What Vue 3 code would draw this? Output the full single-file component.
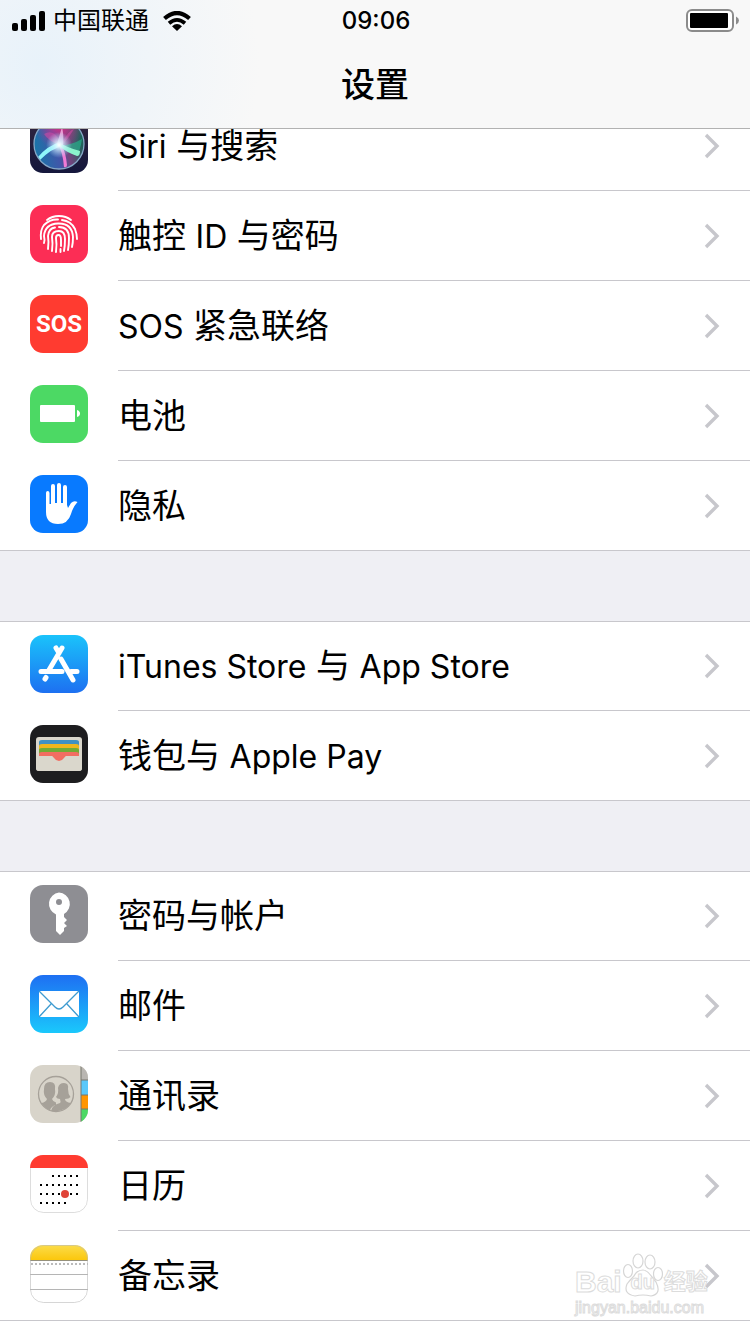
<script setup>
const groups = [
  [
    { icon: 'siri', label: 'Siri 与搜索' },
    { icon: 'touch', label: '触控 ID 与密码' },
    { icon: 'sos', label: 'SOS 紧急联络' },
    { icon: 'battery', label: '电池' },
    { icon: 'privacy', label: '隐私' },
  ],
  [
    { icon: 'store', label: 'iTunes Store 与 App Store' },
    { icon: 'wallet', label: '钱包与 Apple Pay' },
  ],
  [
    { icon: 'key', label: '密码与帐户' },
    { icon: 'mail', label: '邮件' },
    { icon: 'contacts', label: '通讯录' },
    { icon: 'calendar', label: '日历' },
    { icon: 'notes', label: '备忘录' },
  ],
]

// Latin runs are set slightly smaller than the Chinese text beside them.
const runs = (label) =>
  label.match(/[\x21-\x7e]+(?: [\x21-\x7e]+)*|[^\x21-\x7e]+/g).map((text) => ({
    text,
    latin: /[A-Za-z]/.test(text),
  }))

const calendarDots = [
  [22, 20], [28, 20], [34, 20], [40, 20], [46, 20],
  [10, 29], [16, 29], [22, 29], [28, 29], [34, 29], [40, 29], [46, 29],
  [10, 38], [16, 38], [22, 38], [28, 38], [40, 38], [46, 38],
  [10, 47], [16, 47], [22, 47], [28, 47], [34, 47],
]
</script>

<template>
  <div class="page">
    <header class="top">
      <div class="status">
        <div class="carrier">
          <svg class="signal" viewBox="0 0 34 20" aria-hidden="true">
            <rect x="0" y="12" width="6" height="8" rx="2" />
            <rect x="9" y="8" width="6" height="12" rx="2" />
            <rect x="18" y="4" width="6" height="16" rx="2" />
            <rect x="27" y="0" width="6" height="20" rx="2" />
          </svg>
          <span>中国联通</span>
          <svg class="wifi" viewBox="0 0 28 20" aria-hidden="true">
            <path d="M1.500 7.500Q14-3.500 26.500 7.500" fill="none" stroke="#000" stroke-width="4.200" />
            <path d="M6 12.300Q14 5.500 22 12.300" fill="none" stroke="#000" stroke-width="3.800" />
            <path d="M9 15.200Q14 11 19 15.200L14 20Z" />
          </svg>
        </div>
        <time class="time">09:06</time>
        <svg class="power" viewBox="0 0 54 24" aria-hidden="true">
          <rect x="1" y="1" width="46" height="21" rx="5" fill="#fff" stroke="#8b8b8b" stroke-width="2" />
          <rect x="4" y="4" width="38" height="15" rx="1" />
          <path d="M50 7.500Q53 9 53 11.500T50 15.500Z" fill="#8b8b8b" />
        </svg>
      </div>
      <h1>设置</h1>
    </header>

    <main>
      <section v-for="(group, g) in groups" :key="g" class="group">
        <ul>
          <li v-for="item in group" :key="item.icon">
            <a href="#" class="row">
              <span class="icon" aria-hidden="true">
                <span v-if="item.icon === 'sos'" class="sos">SOS</span>
                <svg v-else viewBox="0 0 58 58">
                  <defs>
                    <linearGradient id="storeFill" x2="0" y2="1"><stop stop-color="#1ac3fb" /><stop offset="1" stop-color="#1d70f1" /></linearGradient>
                    <linearGradient id="mailFill" x2="0" y2="1"><stop stop-color="#1e6ff2" /><stop offset="1" stop-color="#1ac8fc" /></linearGradient>
                    <linearGradient id="noteFill" x2="0" y2="1"><stop stop-color="#fbdc4b" /><stop offset="1" stop-color="#fbc70c" /></linearGradient>
                    <linearGradient id="siriBack" x2="0" y2="1"><stop stop-color="#33263f" /><stop offset="1" stop-color="#14173c" /></linearGradient>
                    <linearGradient id="siriOrb" x1="0" y1=".6" x2="1" y2=".4"><stop stop-color="#1876a8" /><stop offset=".45" stop-color="#4156a9" /><stop offset=".65" stop-color="#73447f" /><stop offset="1" stop-color="#126754" /></linearGradient>
                    <radialGradient id="siriPink" cx=".5" cy=".1" r=".5"><stop stop-color="#e12f83" /><stop offset="1" stop-color="#b63192" stop-opacity="0" /></radialGradient>
                    <radialGradient id="siriGlow"><stop stop-color="#fff" /><stop offset=".3" stop-color="#d9f6ff" stop-opacity=".8" /><stop offset="1" stop-color="#a9e4ff" stop-opacity="0" /></radialGradient>
                  </defs>

                  <g v-if="item.icon === 'siri'">
                    <rect width="58" height="58" fill="url(#siriBack)" />
                    <circle cx="29" cy="29" r="25" fill="url(#siriOrb)" />
                    <circle cx="29" cy="29" r="25" fill="url(#siriPink)" />
                    <path d="M14 19Q25 13 31 29Q39 15 44 14Q37 25 32 31Q18 26 14 19Z" fill="#d64aa5" opacity=".55" />
                    <path d="M28 31Q42 30 52 24Q50 38 46 40Z" fill="#25b78c" opacity=".65" />
                    <path d="M8 42Q17 31 30 27L33 31Q22 33 10 45Z" fill="#8ff6fa" />
                    <path d="M28 29Q33 38 34 52Q37 53 37 50Q36 38 31 28Z" fill="#f07bd5" />
                    <path d="M28 27Q38 33 50 36Q50 41 47 41Q36 37 29 31Z" fill="#8bf3cd" />
                    <path d="M27 29L32 12Q34 20 33 30Z" fill="#f7b7e6" opacity=".8" />
                    <circle cx="29" cy="30" r="13" fill="url(#siriGlow)" />
                    <circle cx="29" cy="29" r="25" fill="none" stroke="#86a7c7" stroke-width="1.300" />
                  </g>

                  <g v-else-if="item.icon === 'touch'">
                    <rect width="58" height="58" fill="#fc2d55" />
                    <g fill="none" stroke="#fff" stroke-width="1.900" stroke-linecap="round">
                      <path d="M17 15Q22 11 29 11Q36 11 41 15" />
                      <path d="M11 34Q10 25 14 20Q20 14 28 14.500M32 15Q41 16 45 24Q47 29 47 34" />
                      <path d="M14 38Q15 35 14 31Q15 19 28 18.500Q42 18 43 32Q43 38 42 42" />
                      <path d="M18 44Q19 37 18 31Q19 23 25 22.500M29 22Q39 22 39 33Q39 40 38 45" />
                      <path d="M22 46Q23 38 22 32Q22 26 29 26Q35 26 35 34Q35 41 34 46" />
                      <path d="M26 47Q27 39 26 33Q26 30 28.500 30Q31 30 31 35V41" />
                      <path d="M30.500 44V47" />
                    </g>
                  </g>

                  <g v-else-if="item.icon === 'battery'">
                    <rect width="58" height="58" fill="#4cd964" />
                    <rect x="10" y="20" width="35" height="17" rx="1" fill="#fff" />
                    <path d="M47 25Q50 26 50 28.500T47 32Z" fill="#fff" />
                  </g>

                  <g v-else-if="item.icon === 'privacy'">
                    <rect width="58" height="58" fill="#087aff" />
                    <path d="M16 18Q16 16 17.700 16T19.500 18V29H21V11Q21 9 23 9T25 11V28H27V10Q27 8 29 8T31 10V28H33V12Q33 10 35 10T37 12V30L38 33L41 28Q44 25 47.500 27Q43 32 41 39Q38 49 28 49Q16 49 16 37Z" fill="#fff" />
                  </g>

                  <g v-else-if="item.icon === 'store'">
                    <rect width="58" height="58" fill="url(#storeFill)" />
                    <path d="M32 13L19 35M26 13L29 18M31 24L43 45M16 42.500L15 44M11 36.500H32M41 36.500H47" fill="none" stroke="#fff" stroke-width="5" stroke-linecap="round" />
                  </g>

                  <g v-else-if="item.icon === 'wallet'">
                    <rect width="58" height="58" fill="#1d1d1f" />
                    <rect x="6" y="12" width="46" height="34" rx="3" fill="#dad7cc" />
                    <path d="M9 21V17Q9 15 12 15H46Q49 15 49 17V21Z" fill="#3e91c3" />
                    <path d="M9 25V21Q9 19 12 19H46Q49 19 49 21V25Z" fill="#efb61b" />
                    <path d="M9 29V25Q9 23 12 23H46Q49 23 49 25V29Z" fill="#72ab35" />
                    <path d="M9 31V29Q9 27 12 27H46Q49 27 49 29V31Z" fill="#f26d61" />
                    <path d="M6 31H20Q23 31 24 33Q26 36 29 36T34 33Q35 31 38 31H52V43Q52 46 49 46H9Q6 46 6 43Z" fill="#dad7cc" />
                    <path d="M20 30Q23 31 24 33Q26 36 29 36T34 33Q35 31 38 30Z" fill="#f26d61" />
                  </g>

                  <g v-else-if="item.icon === 'key'">
                    <rect width="58" height="58" fill="#8e8e93" />
                    <path fill-rule="evenodd" d="M29 7.500A11.500 11.500 0 0 1 34 29V32L37 35L34 38L37 41L34 43V46L30 50L26 46V29.500A11.500 11.500 0 0 1 29 7.500ZM29 14A3 3 0 1 0 29 20A3 3 0 1 0 29 14Z" fill="#fff" />
                  </g>

                  <g v-else-if="item.icon === 'mail'">
                    <rect width="58" height="58" fill="url(#mailFill)" />
                    <rect x="9" y="16" width="40" height="26" rx="1" fill="#fff" />
                    <path d="M9 16L25 32Q29 36 33 32L49 16M9 42L21 29M49 42L37 29" fill="none" stroke="#3e9bd0" stroke-width="1.300" />
                  </g>

                  <g v-else-if="item.icon === 'contacts'">
                    <rect width="58" height="58" fill="#d8d4ca" />
                    <rect x="51" width="7" height="15" fill="#b9b6b1" />
                    <rect x="51" y="15" width="7" height="15" fill="#5ac8fa" />
                    <rect x="51" y="30" width="7" height="14" fill="#ff9500" />
                    <rect x="51" y="44" width="7" height="14" fill="#4cd964" />
                    <path d="M51 0V58M51 15H58M51 30H58M51 44H58" stroke="#77766d" stroke-width="1" />
                    <path d="M26 40Q21 41 20 45.500Q14 43 11.500 38Q16 37 17 34Q13 30 14 24Q14 17 20 17T25 24Q26 30 22 34Q23 37 26 37.500Z" fill="#a6a199" />
                    <path d="M21 46Q22 40 30 38Q31 37 30 34Q27 34 26 32Q29 28 28 23Q29 18 34 18T38 24Q38 29 40.500 32Q39 34 35 34Q35 37 41 38Q34 48 21 46Z" fill="#a6a199" />
                    <circle cx="26" cy="29" r="17.500" fill="none" stroke="#a6a199" stroke-width="1.300" />
                  </g>

                  <g v-else-if="item.icon === 'calendar'">
                    <rect width="58" height="58" fill="#fff" />
                    <rect x=".5" y=".5" width="57" height="57" rx="13" fill="none" stroke="#bbb" stroke-opacity=".5" />
                    <rect width="58" height="13" fill="#ff3b30" />
                    <rect v-for="[x, y] in calendarDots" :key="`${x}-${y}`" :x="x" :y="y" width="2" height="2" />
                    <circle cx="35" cy="39" r="4" fill="#e04338" />
                  </g>

                  <g v-else>
                    <rect width="58" height="58" fill="#fff" />
                    <rect width="58" height="15" fill="url(#noteFill)" />
                    <path d="M0 15.500H58" stroke="#96917c" />
                    <path d="M1 19H58" stroke="#bbb" stroke-width="2" stroke-dasharray="2 2" />
                    <path d="M0 29.500H58M0 44.500H58" stroke="#b5b5b5" />
                    <rect x=".5" y=".5" width="57" height="57" rx="13" fill="none" stroke="#bbb" stroke-opacity=".6" />
                  </g>
                </svg>
              </span>
              <span class="body">
                <span class="label"><span v-for="(run, r) in runs(item.label)" :key="r" :class="{ latin: run.latin }">{{ run.text }}</span></span>
                <svg class="chevron" viewBox="0 0 16 26" aria-hidden="true">
                  <path d="M2 2L13 13L2 24" fill="none" stroke="#c7c7cc" stroke-width="3.400" />
                </svg>
              </span>
            </a>
          </li>
        </ul>
      </section>
    </main>

    <div class="watermark">
      <div class="brand">
        <span class="outline">Bai</span>
        <span class="paw">
          <svg viewBox="0 0 42 46" aria-hidden="true">
            <g fill="#fff" stroke="#d6d6d6" stroke-width="1.200">
              <ellipse cx="6" cy="19" rx="4.500" ry="6.500" />
              <ellipse cx="16" cy="9" rx="5" ry="7" />
              <ellipse cx="28" cy="10" rx="5" ry="7" />
              <ellipse cx="36" cy="22" rx="4.500" ry="6.500" />
              <path d="M21 18C27 18 29 25 34 30Q40 42 29 44Q21 42 13 44Q1 42 5 32Q8 28 12 24Q15 18 21 18Z" />
            </g>
          </svg>
          <span class="outline du">du</span>
        </span>
        <span class="outline cn">经验</span>
      </div>
      <div class="outline site">jingyan.baidu.com</div>
    </div>
  </div>
</template>

<style>
body {
  margin: 0;
}
</style>

<style scoped>
.page {
  position: relative;
  min-height: 100vh;
  overflow: hidden;
  background: #fff;
  color: #000;
  font-family: Inter, "Noto Sans CJK SC", sans-serif;
}

.top {
  border-bottom: 1px solid #b2b2b2;
  background:
    radial-gradient(circle 220px at 40px 64px, #e8f2fa, #e8f2fa00),
    #f8f8f8;
}

.status {
  display: grid;
  grid-template-columns: 1fr auto 1fr;
  align-items: center;
  height: 42px;
  padding: 0 10px 0 12px;
  font-size: 24px;
  line-height: 42px;
}

.carrier {
  display: flex;
  align-items: center;
}

.signal {
  width: 34px;
  height: 20px;
  margin-right: 7px;
}

.wifi {
  width: 28px;
  height: 20px;
  margin-left: 14px;
}

.time {
  font-weight: 500;
}

.power {
  width: 54px;
  height: 24px;
  justify-self: end;
}

h1 {
  margin: 0;
  font-size: 34px;
  font-weight: 500;
  line-height: 86px;
  text-align: center;
}

.group {
  border-bottom: 1px solid #c8c7cc;
}

.group + .group {
  margin-top: 70px;
  border-top: 1px solid #c8c7cc;
  box-shadow: 0 -70px #efeff4;
}

ul {
  margin: -1px 0;
  padding: 0;
  list-style: none;
}

.group:first-child ul {
  margin-top: 0;
}

li {
  display: flex;
  align-items: flex-end;
}

.group:first-child li:first-child {
  height: 62px;
  overflow: hidden;
}

.row {
  display: flex;
  flex: 1;
  align-items: center;
  height: 90px;
  padding-left: 30px;
  color: inherit;
  text-decoration: none;
}

.icon {
  flex: none;
  width: 58px;
  height: 58px;
  margin: 0 30px 4px 0;
  border-radius: 13px;
  overflow: hidden;
}

.icon svg {
  display: block;
  width: 58px;
  height: 58px;
}

.sos {
  display: block;
  background: #ff3b30;
  color: #fff;
  font: bold 24px/58px Roboto, sans-serif;
  text-align: center;
}

.body {
  display: flex;
  flex: 1;
  align-items: center;
  justify-content: space-between;
  box-sizing: border-box;
  height: 90px;
  padding-right: 30px;
  border-bottom: 1px solid #c8c7cc;
}

.label {
  font-size: 34px;
  line-height: 48px;
  white-space: pre-wrap;
}

.latin {
  font-size: 32px;
  line-height: 32px;
}

.chevron {
  width: 16px;
  height: 26px;
}

.watermark {
  position: absolute;
  right: 40px;
  bottom: 16px;
  width: 135px;
  white-space: nowrap;
}

.brand {
  display: flex;
  align-items: flex-end;
  height: 46px;
}

.outline {
  color: #fff;
  font-family: "Liberation Sans", "Noto Sans CJK SC", sans-serif;
  font-size: 30px;
  font-weight: 700;
  line-height: 32px;
  -webkit-text-stroke: 1px #dcdcdc;
}

.paw {
  position: relative;
  flex: none;
  width: 42px;
  height: 46px;
}

.paw svg {
  width: 42px;
  height: 46px;
}

.du {
  position: absolute;
  right: 0;
  bottom: 0;
  left: 0;
  font-size: 20px;
  text-align: center;
}

.cn {
  font-size: 22px;
}

.site {
  font-size: 16px;
  font-weight: 400;
  line-height: 20px;
}
</style>
